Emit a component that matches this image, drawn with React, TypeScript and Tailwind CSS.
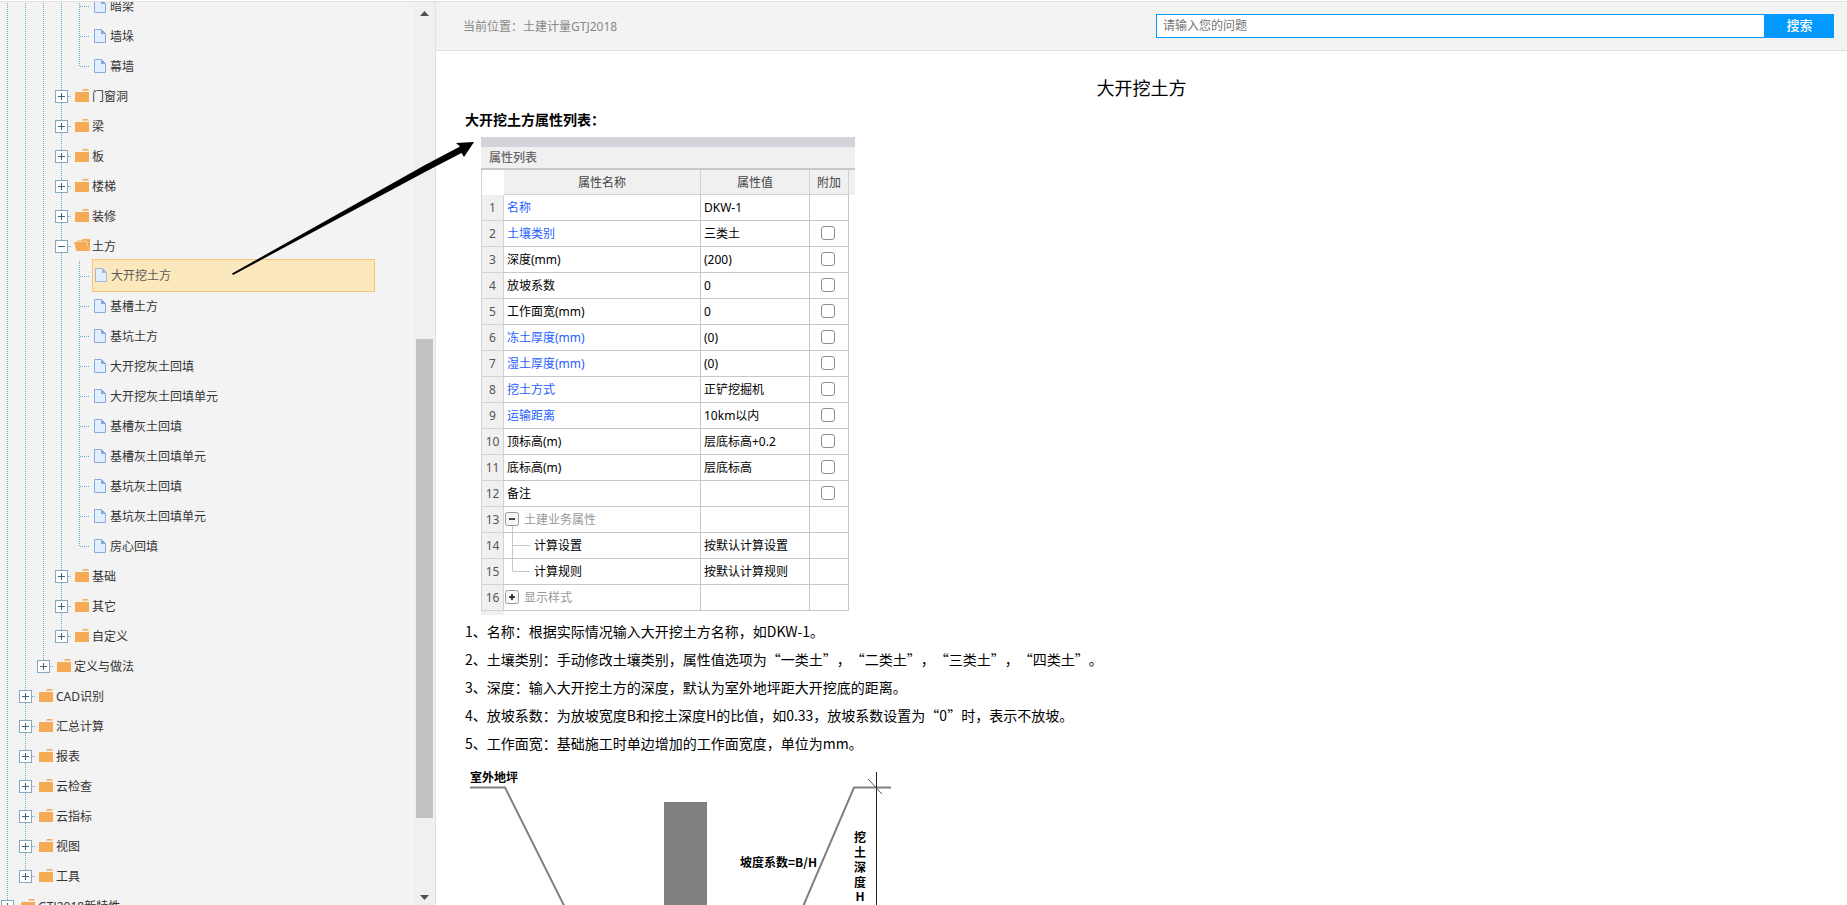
import { useState } from "react";

type TreeRow = {
  depth: number;
  label: string;
  kind: "leaf" | "closed" | "open";
  last?: boolean;
};

type PropertyRow = {
  name: string;
  value?: string;
  checkbox?: boolean;
  tone?: "link" | "muted";
  branch?: "minus" | "plus" | "middle" | "end";
};

const treeRows: TreeRow[] = [
  { depth: 4, label: "暗梁", kind: "leaf" },
  { depth: 4, label: "墙垛", kind: "leaf" },
  { depth: 4, label: "幕墙", kind: "leaf", last: true },
  { depth: 3, label: "门窗洞", kind: "closed" },
  { depth: 3, label: "梁", kind: "closed" },
  { depth: 3, label: "板", kind: "closed" },
  { depth: 3, label: "楼梯", kind: "closed" },
  { depth: 3, label: "装修", kind: "closed" },
  { depth: 3, label: "土方", kind: "open" },
  { depth: 4, label: "大开挖土方", kind: "leaf" },
  { depth: 4, label: "基槽土方", kind: "leaf" },
  { depth: 4, label: "基坑土方", kind: "leaf" },
  { depth: 4, label: "大开挖灰土回填", kind: "leaf" },
  { depth: 4, label: "大开挖灰土回填单元", kind: "leaf" },
  { depth: 4, label: "基槽灰土回填", kind: "leaf" },
  { depth: 4, label: "基槽灰土回填单元", kind: "leaf" },
  { depth: 4, label: "基坑灰土回填", kind: "leaf" },
  { depth: 4, label: "基坑灰土回填单元", kind: "leaf" },
  { depth: 4, label: "房心回填", kind: "leaf", last: true },
  { depth: 3, label: "基础", kind: "closed" },
  { depth: 3, label: "其它", kind: "closed" },
  { depth: 3, label: "自定义", kind: "closed", last: true },
  { depth: 2, label: "定义与做法", kind: "closed", last: true },
  { depth: 1, label: "CAD识别", kind: "closed" },
  { depth: 1, label: "汇总计算", kind: "closed" },
  { depth: 1, label: "报表", kind: "closed" },
  { depth: 1, label: "云检查", kind: "closed" },
  { depth: 1, label: "云指标", kind: "closed" },
  { depth: 1, label: "视图", kind: "closed" },
  { depth: 1, label: "工具", kind: "closed", last: true },
  { depth: 0, label: "GTJ2018新特性", kind: "closed" },
];

const propertyRows: PropertyRow[] = [
  { name: "名称", value: "DKW-1", tone: "link" },
  { name: "土壤类别", value: "三类土", tone: "link", checkbox: true },
  { name: "深度(mm)", value: "(200)", checkbox: true },
  { name: "放坡系数", value: "0", checkbox: true },
  { name: "工作面宽(mm)", value: "0", checkbox: true },
  { name: "冻土厚度(mm)", value: "(0)", tone: "link", checkbox: true },
  { name: "湿土厚度(mm)", value: "(0)", tone: "link", checkbox: true },
  { name: "挖土方式", value: "正铲挖掘机", tone: "link", checkbox: true },
  { name: "运输距离", value: "10km以内", tone: "link", checkbox: true },
  { name: "顶标高(m)", value: "层底标高+0.2", checkbox: true },
  { name: "底标高(m)", value: "层底标高", checkbox: true },
  { name: "备注", checkbox: true },
  { name: "土建业务属性", tone: "muted", branch: "minus" },
  { name: "计算设置", value: "按默认计算设置", branch: "middle" },
  { name: "计算规则", value: "按默认计算规则", branch: "end" },
  { name: "显示样式", tone: "muted", branch: "plus" },
];

const notes = [
  "1、名称：根据实际情况输入大开挖土方名称，如DKW-1。",
  "2、土壤类别：手动修改土壤类别，属性值选项为“一类土”，“二类土”，“三类土”，“四类土”。",
  "3、深度：输入大开挖土方的深度，默认为室外地坪距大开挖底的距离。",
  "4、放坡系数：为放坡宽度B和挖土深度H的比值，如0.33，放坡系数设置为“0”时，表示不放坡。",
  "5、工作面宽：基础施工时单边增加的工作面宽度，单位为mm。",
];

const toneClass = {
  link: "text-[#1f5fff]",
  muted: "text-[#999999]",
};

function GuideLine() {
  return (
    <svg className="h-[30px] w-[18px] shrink-0" viewBox="0 0 18 30">
      <path d="M7.5 0V30" stroke="#5fb0d8" strokeDasharray="1 1" />
    </svg>
  );
}

// 树节点前的连接线：文件夹带展开框，叶子节点只有虚线
function NodeJoint({ row }: { row: TreeRow }) {
  const vertical = row.last ? "M7.5 0V16" : "M7.5 0V30";

  return (
    <svg className="h-[30px] w-[18px] shrink-0" viewBox="0 0 18 30">
      <path
        d={`${vertical}M8 15.5H18`}
        fill="none"
        stroke="#5fb0d8"
        strokeDasharray="1 1"
      />
      {row.kind !== "leaf" && (
        <>
          <rect
            fill="#ffffff"
            height="12"
            stroke="#86a9bb"
            width="12"
            x="1.5"
            y="9.5"
          />
          <path
            d={row.kind === "open" ? "M4 15.5H11" : "M4 15.5H11M7.5 12V19"}
            stroke="#45637a"
          />
        </>
      )}
    </svg>
  );
}

function NodeIcon({ kind }: { kind: TreeRow["kind"] }) {
  if (kind === "leaf") {
    return (
      <svg className="h-[30px] w-[18px] shrink-0" viewBox="0 0 18 30">
        <path
          d="M4.5 8.5H11.5L15.5 12.5V21.5H4.5Z"
          fill="#e1efff"
          stroke="#8aaade"
        />
        <path d="M11 8L16 13H11Z" fill="#8aaade" />
      </svg>
    );
  }

  if (kind === "open") {
    return (
      <svg className="h-[30px] w-[18px] shrink-0" viewBox="0 0 18 30">
        <path d="M5 9.500H9.500L10.500 8H18V20H17L15 10.500H5Z" fill="#f5aa54" />
        <path d="M2 11H14.500L17 20H4.500Z" fill="#f5aa54" />
      </svg>
    );
  }

  return (
    <svg className="h-[30px] w-[18px] shrink-0" viewBox="0 0 18 30">
      <rect fill="#f5aa54" height="10" rx="0.5" width="14" x="3" y="11" />
      <path d="M11 8H16L17 9.5H10Z" fill="#f5aa54" />
    </svg>
  );
}

function TreeItem({
  onSelect,
  row,
  selected,
}: {
  onSelect: () => void;
  row: TreeRow;
  selected: boolean;
}) {
  return (
    <li className="flex h-[30px] items-center">
      {Array.from({ length: row.depth }, (_, index) => (
        <GuideLine key={index} />
      ))}
      <NodeJoint row={row} />
      <a
        className={
          selected
            ? "mb-px ml-0.5 flex h-[33px] w-[283px] items-center border border-[#ffb951] bg-[#ffe6b0] pb-0.5 opacity-80"
            : "flex items-center"
        }
        href="#"
        onClick={onSelect}
      >
        <span className={selected ? "-ml-0.5" : ""}>
          <NodeIcon kind={row.kind} />
        </span>
        <span className="pt-0.5 pl-0.5">{row.label}</span>
      </a>
    </li>
  );
}

function ScrollTrack() {
  return (
    <div className="flex w-[21px] shrink-0 flex-col bg-[#f0f0f0] pt-0.5">
      <svg className="h-5 w-full" viewBox="0 0 21 20">
        <path d="M6 12H15L10.500 7Z" fill="#505050" />
      </svg>
      <div className="flex-1 px-0.5">
        <div className="h-[36.6%]" />
        <div className="h-[55.6%] w-[17px] bg-[#c1c1c1]" />
      </div>
      <svg className="h-5 w-full" viewBox="0 0 21 20">
        <path d="M6 10H15L10.500 15Z" fill="#505050" />
      </svg>
    </div>
  );
}

function BranchMark({ branch }: { branch: PropertyRow["branch"] }) {
  if (branch === "minus" || branch === "plus") {
    return (
      <svg className="mr-1 -ml-0.5 h-[25px] w-[15px]" viewBox="0 0 15 25">
        <rect
          fill="#f7f7f7"
          height="13"
          rx="2"
          stroke="#9a9a9a"
          width="13"
          x="0.5"
          y="5.5"
        />
        <path
          d={branch === "minus" ? "M4 12H10" : "M4 12H10M7 9V15"}
          stroke="#111111"
          strokeWidth="1.500"
        />
        {branch === "minus" && <path d="M7.5 19V25" stroke="#c4c7cc" />}
      </svg>
    );
  }

  return (
    <svg className="mr-1 -ml-0.5 h-[26px] w-[25px]" viewBox="0 0 25 26">
      <path
        d={branch === "middle" ? "M7.5 0V26M7.5 12.5H25" : "M7.5 0V12.5H25"}
        fill="none"
        stroke="#c4c7cc"
      />
    </svg>
  );
}

function PropertyTable() {
  return (
    <section className="ml-4 w-[374px] text-xs text-black">
      <div className="h-2.5 bg-[#d3d4da]" />
      <h2 className="h-[23px] border-b-2 border-[#c4c8cc] bg-[#f0f0f0] pt-px pl-2 leading-5 font-medium text-[#666666]">
        属性列表
      </h2>
      <div className="flex">
        <table className="w-[368px] table-fixed border-separate border-spacing-0">
          <colgroup>
            <col className="w-[23px]" />
            <col className="w-[197px]" />
            <col className="w-[109px]" />
            <col className="w-[39px]" />
          </colgroup>
          <thead>
            <tr className="h-[25px] text-[#444444]">
              <th className="border-l border-[#d0d2d6]" />
              <th className="border-r border-b border-[#d0d2d6] bg-[#f0f0f0] p-0 pt-0.5 font-normal">
                属性名称
              </th>
              <th className="border-r border-b border-[#d0d2d6] bg-[#f0f0f0] p-0 pt-0.5 font-normal">
                属性值
              </th>
              <th className="border-r border-b border-[#d0d2d6] bg-[#f0f0f0] p-0 pt-0.5 font-normal">
                附加
              </th>
            </tr>
          </thead>
          <tbody>
            {propertyRows.map((row, index) => (
              <tr className="h-[26px]" key={row.name}>
                <td className="border-x border-b border-[#d0d2d6] bg-[#f0f0f0] p-0 text-center text-[#555555]">
                  {index + 1}
                </td>
                <td className="border-r border-b border-[#c4c7cc] p-0 pl-[3px]">
                  <div
                    className={`flex h-[25px] items-center ${row.tone ? toneClass[row.tone] : ""}`}
                  >
                    {row.branch && <BranchMark branch={row.branch} />}
                    {row.name}
                  </div>
                </td>
                <td className="border-r border-b border-[#c4c7cc] p-0 pl-[3px]">
                  {row.value}
                </td>
                <td className="border-r border-b border-[#c4c7cc] p-0 pr-0.5 pb-px">
                  {row.checkbox && (
                    <input
                      aria-label={row.name}
                      className="mx-auto block size-3.5 appearance-none rounded-[3px] border border-[#8e8e8e] bg-white checked:bg-[#1f5fff]"
                      type="checkbox"
                    />
                  )}
                </td>
              </tr>
            ))}
          </tbody>
        </table>
        <div className="h-[25px] flex-1 bg-[#f0f0f0]" />
      </div>
      <div className="h-1 w-[23px] bg-[#f0f0f0]" />
    </section>
  );
}

// 基坑剖面示意图
function PitDiagram() {
  return (
    <svg
      className="block h-[300px] w-[440px]"
      fontFamily="'Noto Sans CJK SC', sans-serif"
      fontSize="12"
      fontWeight="bold"
      viewBox="0 0 440 300"
    >
      <path
        d="M5 29.500H40L145 239.500H299L389 29.500H426"
        fill="none"
        stroke="#808080"
        strokeWidth="2"
      />
      <rect fill="#808080" height="195" width="43" x="199" y="44" />
      <path d="M411.500 14V240" stroke="#222222" />
      <path d="M403 21L417 36" stroke="#555555" />
      <text x="5" y="24">
        室外地坪
      </text>
      <text x="275" y="109">
        坡度系数=B/H
      </text>
      <text textAnchor="middle">
        <tspan x="395" y="84">挖</tspan>
        <tspan x="395" y="99">土</tspan>
        <tspan x="395" y="114">深</tspan>
        <tspan x="395" y="129">度</tspan>
        <tspan x="395" y="143">H</tspan>
      </text>
    </svg>
  );
}

export default function App() {
  const [selectedLabel, setSelectedLabel] = useState("大开挖土方");
  const [question, setQuestion] = useState("");

  return (
    <div
      className="relative flex h-screen flex-col overflow-hidden bg-white pt-px font-['Noto_Sans','Noto_Sans_CJK_SC',sans-serif]"
      lang="zh-CN"
    >
      <div className="flex min-h-0 flex-1 border-t border-[#e0e0e0]">
        <aside className="flex w-[436px] shrink-0 border-r border-[#e0e0e0] bg-[#f3f3f3]">
          <nav className="min-w-0 flex-1 overflow-hidden text-xs text-[#333333]">
            <ul className="-mt-[11px]">
              {treeRows.map((row) => (
                <TreeItem
                  key={row.label}
                  onSelect={() => setSelectedLabel(row.label)}
                  row={row}
                  selected={row.label === selectedLabel}
                />
              ))}
            </ul>
          </nav>
          <ScrollTrack />
        </aside>

        <main className="flex min-w-0 flex-1 flex-col overflow-hidden">
          <header className="flex h-[49px] shrink-0 items-center justify-between border-b border-[#e0e0e0] bg-[#f3f3f3] pr-[13px] pl-[27px] text-xs">
            <p className="pt-0.5 text-[#888888]">
              当前位置：土建计量GTJ2018
            </p>
            <form
              className="flex h-6 w-[678px]"
              onSubmit={(event) => event.preventDefault()}
            >
              <input
                aria-label="请输入您的问题"
                className="min-w-0 flex-1 border border-[#0099ff] bg-white px-1.5 outline-none placeholder:text-[#757575]"
                onChange={(event) => setQuestion(event.target.value)}
                placeholder="请输入您的问题"
                value={question}
              />
              <button
                className="w-[69px] bg-[#0099ff] pb-0.5 text-[13px] leading-5 font-medium text-white"
                type="submit"
              >
                搜索
              </button>
            </form>
          </header>

          <article className="px-[29px] pt-[22px] font-['Noto_Sans_CJK_SC',sans-serif] text-sm text-black [text-spacing-trim:space-all]">
            <h1 className="text-center text-lg leading-7 font-normal">
              大开挖土方
            </h1>
            <h2 className="mt-1 mb-1 leading-7 font-bold">
              大开挖土方属性列表：
            </h2>
            <div className="font-['Noto_Sans','Noto_Sans_CJK_SC',sans-serif]">
              <PropertyTable />
            </div>
            <div className="mt-0.5 mb-px">
              {notes.map((note) => (
                <p className="leading-7" key={note}>
                  {note}
                </p>
              ))}
            </div>
            <PitDiagram />
          </article>
        </main>
      </div>

      <svg
        className="pointer-events-none absolute top-[140px] left-[230px] h-[140px] w-[250px]"
        viewBox="0 0 250 140"
      >
        <path
          d="M2 133.500L195 25L230 6.500L226 3L244 2L234 17L231.500 13L195 32L3 135Z"
          fill="#000000"
        />
      </svg>
    </div>
  );
}
